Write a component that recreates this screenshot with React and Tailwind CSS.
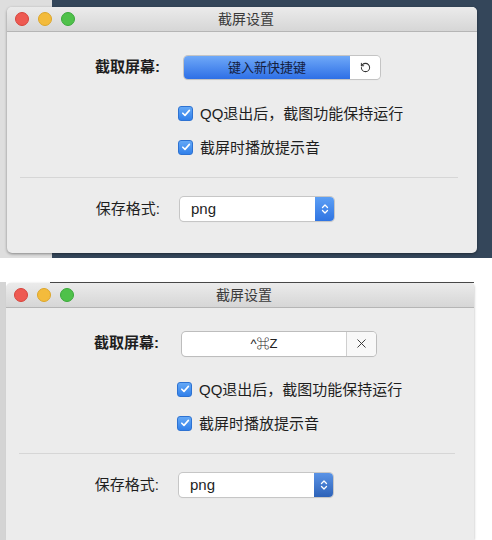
import { RotateCcw, X } from 'lucide-react'

const FONT = "[font-family:'Liberation_Sans','Noto_Sans_CJK_SC','DejaVu_Sans',sans-serif]"

function TrafficLights() {
  return (
    <div className="flex items-center gap-[9px]">
      <span className="w-[14px] h-[14px] rounded-full bg-[#ee5a52] border border-[#d6443c]" />
      <span className="w-[14px] h-[14px] rounded-full bg-[#f3bb3c] border border-[#dba52a]" />
      <span className="w-[14px] h-[14px] rounded-full bg-[#4fc14a] border border-[#3aa83a]" />
    </div>
  )
}

function Checkbox({ label }) {
  return (
    <div className="flex items-center h-[22px] gap-[7px]">
      <span className="w-[15px] h-[15px] rounded-[3px] bg-[linear-gradient(#64a8f6,#3180ea)] border border-[#2d72d2] flex items-center justify-center">
        <svg width="10" height="10" viewBox="0 0 10 10">
          <path d="M1.8 5.2 L4 7.4 L8.4 2.4" fill="none" stroke="white" strokeWidth="1.6" strokeLinecap="round" strokeLinejoin="round" />
        </svg>
      </span>
      <span className="text-[15px] text-[#1e1e1e] leading-none">{label}</span>
    </div>
  )
}

function Stepper({ dim }) {
  return (
    <div className={`w-[19px] self-stretch rounded-r-[4px] flex items-center justify-center ${dim ? 'bg-[linear-gradient(#5a93e6,#2d62b8)]' : 'bg-[linear-gradient(#5c9ff5,#2f74e2)]'}`}>
      <svg width="8" height="12" viewBox="0 0 8 12">
        <path d="M1.5 4.5 L4 2 L6.5 4.5 M1.5 7.5 L4 10 L6.5 7.5" fill="none" stroke="white" strokeWidth="1.3" strokeLinecap="round" strokeLinejoin="round" />
      </svg>
    </div>
  )
}

function Window({ recording, className }) {
  return (
    <div className={`bg-[#ececec] flex flex-col overflow-hidden ${className}`}>
      <div className="grid grid-cols-[1fr_auto_1fr] items-center h-[25px] pl-[8px] bg-[linear-gradient(#ebebeb,#d6d6d6)] border-b border-[#b5b5b5] shrink-0">
        <TrafficLights />
        <span className="text-[14px] text-[#3a3a3a]">截屏设置</span>
        <span />
      </div>

      <div className="flex items-center mt-[24px] h-[23px]">
        <span className="w-[153px] text-right text-[15px] font-bold text-[#1e1e1e]">截取屏幕:</span>
        {recording ? (
          <div className="ml-[24px] flex h-[23px] w-[196px] rounded-[4px] shadow-[0_0_0_1px_#c4c4c4,0_1px_1px_rgba(0,0,0,0.15)] overflow-hidden">
            <div className="w-[166px] bg-[linear-gradient(#6fa9f8,#2e6fe6)] flex items-center justify-center text-[13px] [color:#142040]">
              键入新快捷键
            </div>
            <div className="flex-1 bg-white flex items-center justify-center text-[#333]">
              <RotateCcw size={11} strokeWidth={2.2} />
            </div>
          </div>
        ) : (
          <div className="ml-[23px] flex h-[24px] w-[194px] rounded-[4px] bg-white shadow-[0_0_0_1px_#bdbdbd,0_1px_1px_rgba(0,0,0,0.15)] overflow-hidden">
            <div className="w-[165px] flex items-center justify-center text-[13px] text-[#222] border-r border-[#cfcfcf]">
              ^⌘Z
            </div>
            <div className="flex-1 bg-[#f8f8f8] flex items-center justify-center text-[#333]">
              <X size={15} strokeWidth={1.5} />
            </div>
          </div>
        )}
      </div>

      <div className="flex flex-col gap-[12px] mt-[23px] pl-[171px]">
        <Checkbox label="QQ退出后，截图功能保持运行" />
        <Checkbox label="截屏时播放提示音" />
      </div>

      <div className="mt-[19px] ml-[13px] mr-[19px] h-px bg-[#d6d6d6]" />

      <div className="flex items-center mt-[19px] h-[24px]">
        <span className="w-[153px] text-right text-[15px] text-[#1e1e1e]">保存格式:</span>
        <div className="ml-[20px] flex h-[24px] w-[154px] rounded-[4px] bg-white shadow-[0_0_0_1px_#c6c6c6,0_1px_1px_rgba(0,0,0,0.15)]">
          <span className="flex-1 pl-[11px] flex items-center text-[15px] text-[#1e1e1e]">png</span>
          <Stepper dim={!recording} />
        </div>
      </div>
    </div>
  )
}

export default function App() {
  return (
    <div className={`w-[492px] h-[540px] bg-white overflow-hidden flex flex-col ${FONT}`}>
      <div className="h-[258px] pt-[7px] pl-[7px] bg-[linear-gradient(to_right,#dedede_52px,#34465a_52px)]">
        <Window recording className="w-[470px] h-[246px] rounded-[5px] shadow-[0_1px_3px_rgba(0,0,0,0.4)]" />
      </div>
      <div className="h-[282px] pt-[24px] bg-white">
        <div className="h-full flex flex-col bg-[linear-gradient(to_right,#d4d4d4_6px,transparent_6px)]">
          <div className="ml-[50px] w-[424px] h-px bg-[#4a4a4a] shrink-0" />
          <Window className="ml-[6px] w-[468px] flex-1 rounded-t-[5px] shadow-[1px_0_2px_rgba(0,0,0,0.15)]" />
        </div>
      </div>
    </div>
  )
}
